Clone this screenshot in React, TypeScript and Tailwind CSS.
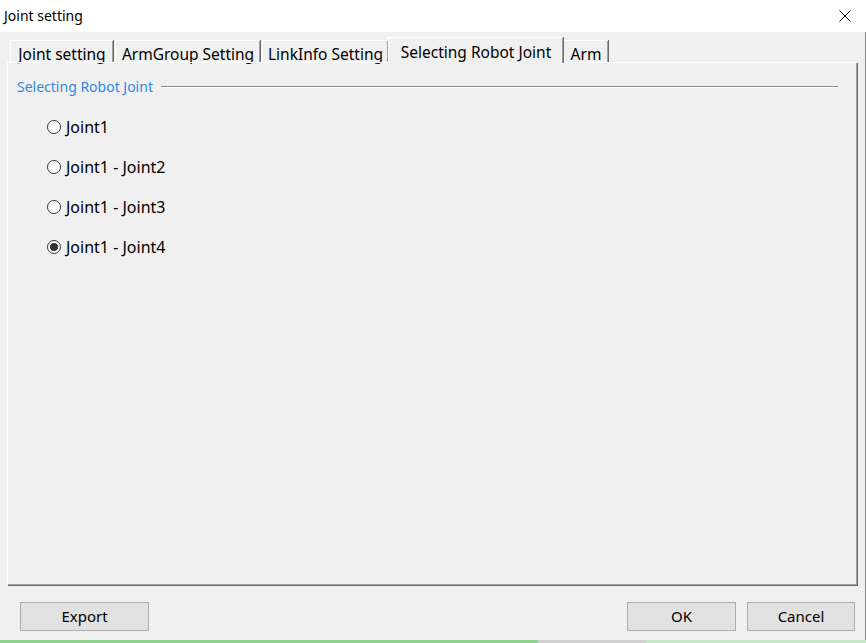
import React from 'react';

const tabs = [
  { label: 'Joint setting', width: 103, ml: 0 },
  { label: 'ArmGroup Setting', width: 145, ml: 2 },
  { label: 'LinkInfo Setting', width: 126, ml: 2 },
  { label: 'Selecting Robot Joint', width: 175, ml: 0, active: true },
  { label: 'Arm', width: 45, ml: 0 },
];

const joints = ['Joint1', 'Joint1 - Joint2', 'Joint1 - Joint3', 'Joint1 - Joint4'];

function Tab({ label, width, ml, active }: { label: string; width: number; ml: number; active?: boolean }) {
  if (active) {
    return (
      <div
        className="relative z-10 -mb-px flex h-[26px] items-start justify-center border-l border-t border-white bg-[#f0f0f0] pt-[7px] shadow-[inset_-1px_0_0_#a0a0a0,1px_0_0_#696969]"
        style={{ width, marginLeft: ml }}
      >
        {label}
      </div>
    );
  }
  return (
    <div
      className="flex h-[22px] items-start justify-center border-l border-t border-white bg-[#f0f0f0] pt-[6px] shadow-[inset_-1px_0_0_#a0a0a0,1px_0_0_#696969]"
      style={{ width, marginLeft: ml }}
    >
      {label}
    </div>
  );
}

function Radio({ label, checked }: { label: string; checked?: boolean }) {
  return (
    <div className="flex h-[40px] items-center">
      <span className="flex h-[14px] w-[14px] items-center justify-center rounded-full border border-[#333333] bg-white">
        {checked && <span className="h-[8px] w-[8px] rounded-full bg-[#333333]" />}
      </span>
      <span className="ml-[5px] text-[16px]">{label}</span>
    </div>
  );
}

export default function App() {
  return (
    <div
      className="relative flex h-[643px] w-[866px] flex-col bg-[#f0f0f0] text-[14px] leading-none text-black"
      style={{ fontFamily: '"Noto Sans", "Open Sans", sans-serif' }}
    >
      {/* Title bar */}
      <div className="flex h-[32px] items-center justify-between bg-white pl-[4px] pr-[15px]">
        <span>Joint setting</span>
        <svg width="12" height="12" viewBox="0 0 12 12" className="text-black">
          <path d="M0.5 0.5 L11.5 11.5 M11.5 0.5 L0.5 11.5" stroke="currentColor" strokeWidth="1" />
        </svg>
      </div>

      <div className="flex flex-1 flex-col border-r border-[#8a8a8a]">
        {/* Tabs */}
        <div className="flex h-[30px] items-end pl-[10px] text-[15.5px]">
          {tabs.map((t) => (
            <Tab key={t.label} {...t} />
          ))}
        </div>

        {/* Panel */}
        <div className="ml-[7px] h-[523px] w-[850px] border-l border-t border-white shadow-[inset_-1px_-1px_0_#a0a0a0,1px_1px_0_#696969]">
          <div className="flex items-center pl-[9px] pt-[17px]">
            <span className="text-[#3288df]">Selecting Robot Joint</span>
            <div className="ml-[8px] w-[677px] border-b border-t border-b-white border-t-[#8c8c8c]" />
          </div>
          <div className="flex flex-col pl-[39px] pt-[13px]">
            {joints.map((j, i) => (
              <Radio key={j} label={j} checked={i === 3} />
            ))}
          </div>
        </div>

        {/* Buttons */}
        <div className="mt-[17px] flex items-center pl-[20px] pr-[10px] text-[15px]">
          <button className="h-[29px] w-[129px] border border-[#adadad] bg-[#e1e1e1]">Export</button>
          <div className="flex-1" />
          <button className="h-[29px] w-[109px] border border-[#adadad] bg-[#e1e1e1]">OK</button>
          <button className="ml-[11px] h-[29px] w-[108px] border border-[#adadad] bg-[#e1e1e1]">Cancel</button>
        </div>
      </div>

      {/* Strip of the window behind */}
      <div className="flex h-[3px] w-full">
        <div className="w-[538px] bg-[#8fd18f]" />
        <div className="w-[108px] bg-[#d0d0d0]" />
        <div className="flex-1 bg-[#c9e6c9]" />
      </div>
    </div>
  );
}
